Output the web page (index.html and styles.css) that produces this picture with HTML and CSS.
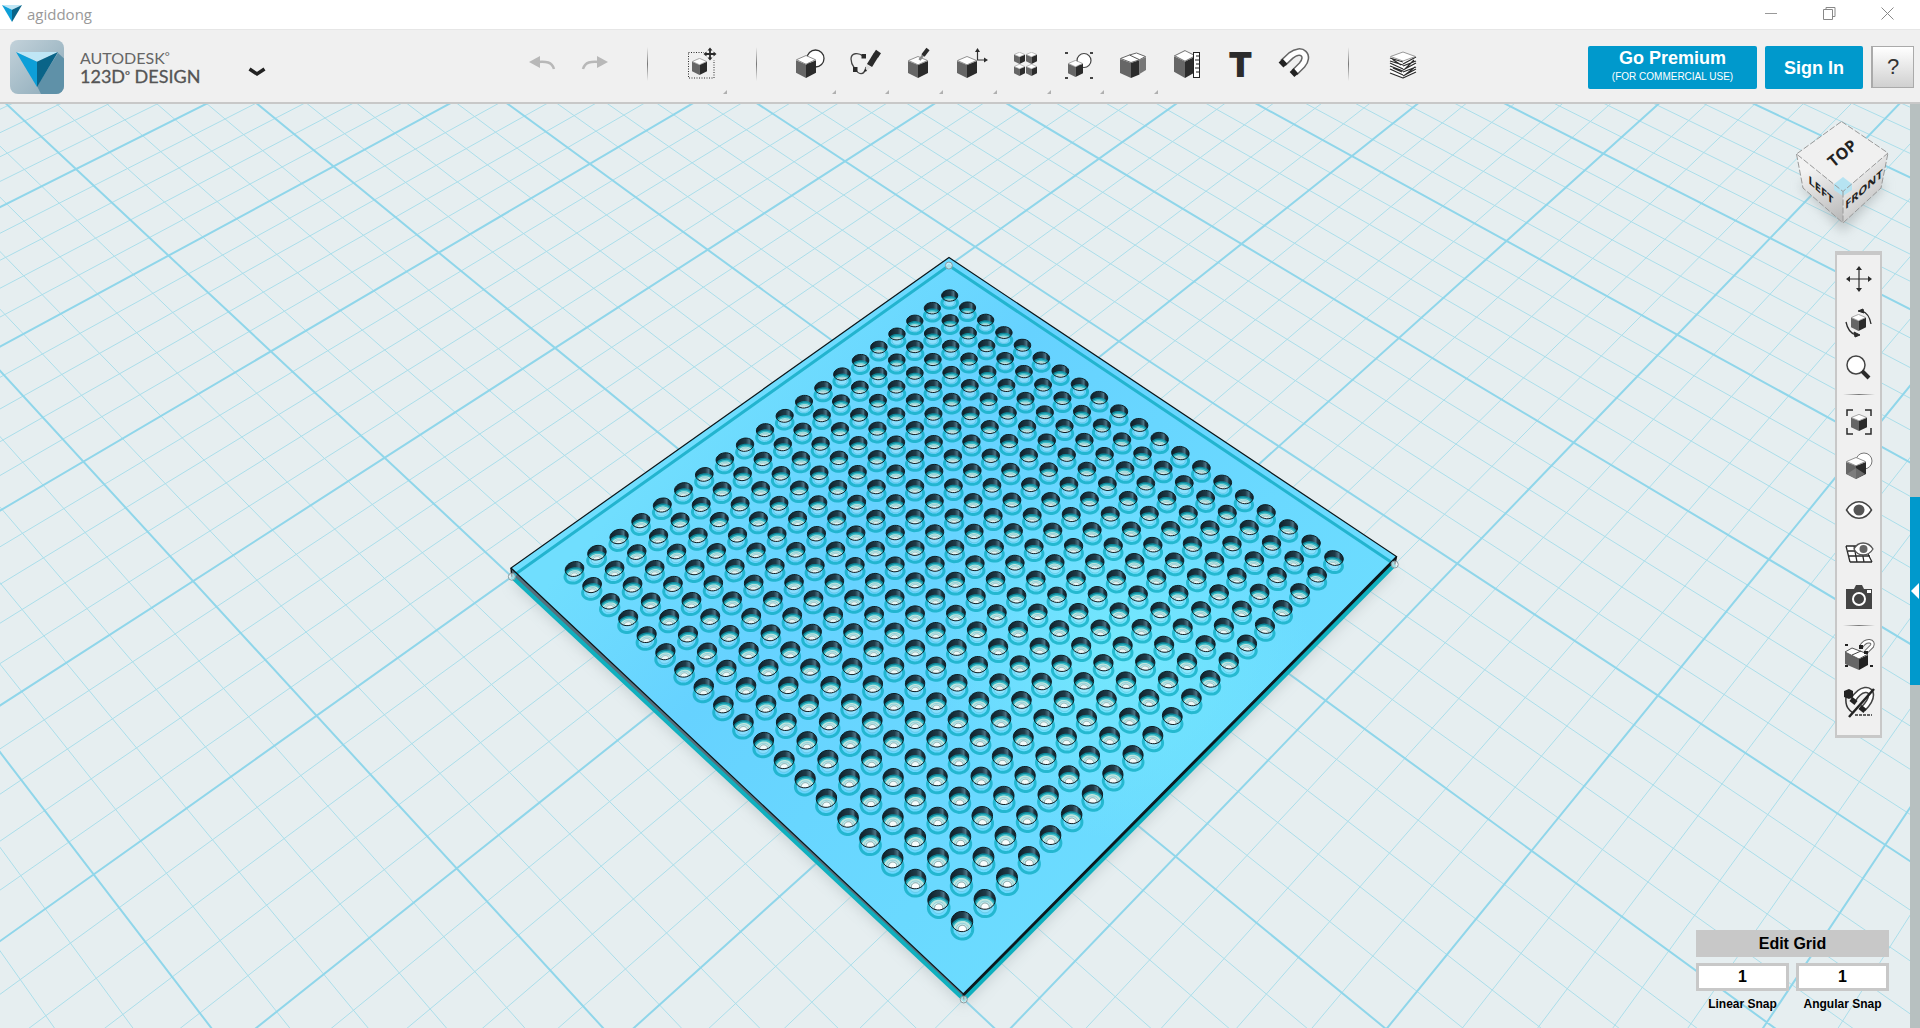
FILE: index.html
```html
<!DOCTYPE html>
<html lang="en">
<head>
<meta charset="utf-8">
<title>agiddong</title>
<link rel="stylesheet" href="styles.css">
</head>
<body>
<svg class="sprite" aria-hidden="true">
  <symbol id="cube" viewBox="0 0 20 22" preserveAspectRatio="none">
    <path d="M0 5 L10 9 V22 L0 17Z" fill="#666"/>
    <path d="M20 5 L10 9 V22 L20 17Z" fill="#2b2b2b"/>
    <path d="M10 .5 L19.5 4.5 L10 8.8 L.5 4.5Z" fill="#fff" stroke="#777" stroke-width=".8"/>
  </symbol>
  <symbol id="gem" viewBox="0 0 42 40" preserveAspectRatio="none">
    <path d="M0 0 H42 L21 11Z" fill="#bfe6f5"/>
    <path d="M0 0 L21 11 V40Z" fill="#0d9fd8"/>
    <path d="M42 0 L21 11 V40Z" fill="#0a6488"/>
  </symbol>
</svg>

<header class="titlebar">
  <svg class="titlebar-icon" width="20" height="17"><use href="#gem" width="20" height="17"/></svg>
  <span class="titlebar-name">agiddong</span>
  <div class="window-controls">
    <button aria-label="Minimize"><svg width="13" height="13"><path d="M0 6.5H12" stroke="#999"/></svg></button>
    <button aria-label="Restore"><svg width="13" height="13" fill="none" stroke="#888"><path d="M.5 2.5H9.500V12.500H.5Z M3 2.500V.5H12V9.500H10"/></svg></button>
    <button aria-label="Close"><svg width="13" height="13"><path d="M.5 .5L12.500 12.500M12.500 .5L.5 12.500" stroke="#888"/></svg></button>
  </div>
</header>

<div class="toolbar">
  <div class="brand">
    <svg class="brand-logo" width="54" height="54" viewBox="0 0 54 54">
      <defs>
        <linearGradient id="tile" x1="0" y1="0" x2="1" y2="1"><stop offset="0" stop-color="#c3d2da"/><stop offset="1" stop-color="#8ba9b8"/></linearGradient>
        <clipPath id="tileClip"><rect width="54" height="54" rx="8"/></clipPath>
      </defs>
      <rect width="54" height="54" rx="8" fill="url(#tile)"/>
      <path d="M48 13 L60 24 V60 H34 L27 46Z" fill="#5f91a8" clip-path="url(#tileClip)"/>
      <use href="#gem" x="6" y="12" width="42" height="35"/>
    </svg>
    <div class="brand-text"><span class="brand-maker">AUTODESK<sup>°</sup></span><span class="brand-product">123D<sup>°</sup> DESIGN</span></div>
    <button class="brand-menu" aria-label="Menu"><svg width="18" height="10"><path d="M1.500 2L9 7L16.500 2" fill="none" stroke="#222" stroke-width="3.500"/></svg></button>
  </div>

  <div class="history">
    <button aria-label="Undo"><svg width="27" height="14"><path d="M0 6L11 0V12Z" fill="#b8b8b8"/><path d="M8 6C17 5 23 6 25 13" fill="none" stroke="#b8b8b8" stroke-width="2.500"/></svg></button>
    <button aria-label="Redo"><svg width="27" height="14"><path d="M27 6L16 0V12Z" fill="#b8b8b8"/><path d="M19 6C10 5 4 6 2 13" fill="none" stroke="#b8b8b8" stroke-width="2.500"/></svg></button>
  </div>
  <span class="divider"></span>
  <button class="tool more" aria-label="Transform"><svg viewBox="0 0 32 32"><path d="M2.500 4.500H28V30H2.500Z" fill="none" stroke="#2b2b2b" stroke-dasharray="1 1.500"/><rect x="18" y="0" width="12" height="12" fill="#f0f0f0"/><use href="#cube" x="6" y="10" width="15" height="17"/><path d="M24 1V11M19 6H29" stroke="#2b2b2b" stroke-width="1.800"/><path d="M24 -.5L26.500 2.500H21.500ZM24 12.500L26.500 9.500H21.500ZM17.500 6L20.500 3.500V8.500ZM30.500 6L27.500 3.500V8.500Z" fill="#2b2b2b"/></svg></button>
  <span class="divider"></span>
  <div class="tools">
    <button class="tool more" aria-label="Primitives"><svg viewBox="0 0 32 32"><circle cx="20.500" cy="10.500" r="8.500" fill="#fff" stroke="#333" stroke-width="1.300"/><use href="#cube" x="1" y="7" width="20" height="23"/></svg></button>
    <button class="tool more" aria-label="Sketch"><svg viewBox="0 0 32 32"><path d="M14 8C9 4 2 5 2 11C2 16 4 18 6 21C9 26 15 29 17 19" fill="none" stroke="#444" stroke-width="1.300"/><path d="M12.500 6H17V10.500H12.500ZM4 19H8.500V24H4Z" fill="#2b2b2b"/><path d="M20.500 17.500L27 7" stroke="#2b2b2b" stroke-width="6"/><path d="M26.500 8L29.500 3.500" stroke="#2b2b2b" stroke-width="6"/><path d="M17.500 16.500L22 19.500L16 24Z" fill="#ddd"/><path d="M16.500 20.500L18 23L15 24Z" fill="#222"/></svg></button>
    <button class="tool more" aria-label="Construct"><svg viewBox="0 0 32 32"><use href="#cube" x="6" y="8" width="20" height="22"/><path d="M17.500 12L21.500 6.500" stroke="#888" stroke-width="2.500"/><path d="M21 7.500L26 1" stroke="#2b2b2b" stroke-width="4"/></svg></button>
    <button class="tool more" aria-label="Modify"><svg viewBox="0 0 32 32"><use href="#cube" x="1" y="8" width="20" height="22"/><path d="M21.500 3V12H29" fill="none" stroke="#333" stroke-width="1.200"/><path d="M21.500 0L24 4H19ZM32 12L28 9.500V14.500Z" fill="#2b2b2b"/></svg></button>
    <button class="tool more" aria-label="Pattern"><svg viewBox="0 0 32 32"><use href="#cube" x="4" y="4" width="11" height="12"/><use href="#cube" x="16" y="4" width="11" height="12"/><use href="#cube" x="4" y="16" width="11" height="12"/><use href="#cube" x="16" y="16" width="11" height="12"/></svg></button>
    <button class="tool more" aria-label="Grouping"><svg viewBox="0 0 32 32"><circle cx="21" cy="12.500" r="7" fill="#fff" stroke="#444" stroke-width="1.200"/><use href="#cube" x="5" y="12" width="15" height="17"/><path d="M2 4H5V6H2ZM27 4H30V6H27ZM2 29H5V31H2ZM27 29H30V31H27Z" fill="#444"/></svg></button>
    <button class="tool more" aria-label="Combine"><svg viewBox="0 0 32 32"><path d="M3 11L14 15V30L3 25Z" fill="#666"/><path d="M14 15L22.500 12V26.500L14 30Z" fill="#2b2b2b"/><path d="M22.500 12L29 9V22L22.500 26Z" fill="#777"/><path d="M3.500 10.500L12.500 7L19.500 5L28.500 8.500L22 12L14 14.500Z" fill="#fff" stroke="#666"/><path d="M12.500 7L22 11.500" stroke="#555"/></svg></button>
    <button class="tool" aria-label="Measure"><svg viewBox="0 0 32 32"><use href="#cube" x="3" y="2" width="22" height="28"/><rect x="22.500" y="4.500" width="6" height="25" fill="#fff" stroke="#222"/><path d="M25 8H28M24 12H28M25 16H28M24 20H28M25 24H28" stroke="#222"/></svg></button>
    <button class="tool tool-text" aria-label="Text">T</button>
    <button class="tool" aria-label="Snap"><svg viewBox="0 0 32 32" fill="none"><path d="M5 15L13 7.500C24 -1 32 8 24 17L16.500 24.500" stroke="#666" stroke-width="8"/><path d="M5 15L13 7.500C24 -1 32 8 24 17L16.500 24.500" stroke="#fff" stroke-width="5"/><path d="M3 17L7 13.200M14 26.500L18 22.900" stroke="#222" stroke-width="7"/></svg></button>
  </div>
  <span class="divider"></span>
  <button class="tool" aria-label="Material"><svg viewBox="0 0 32 32"><path d="M3 8L16 13V30L3 25ZM29 8L16 13V30L29 25Z" fill="#fff"/><path d="M3 10L16 14M3 13L16 17M3 15L16 21M3 18L16 23M3 21L16 27M3 25L16 30M16 16L29 9M16 18L29 13M16 22L29 15M16 24L29 19M16 28L29 21M16 30L29 24M5 11L14 17M18 21L27 12M6 20L15 24M18 27L28 19" fill="none" stroke="#2b2b2b" stroke-width="1.300"/><path d="M3.500 8.500L16 4L28.500 8.500L16 13Z" fill="#fff" stroke="#999"/></svg></button>

  <div class="account">
    <button class="cta premium">Go Premium<small>(FOR COMMERCIAL USE)</small></button>
    <button class="cta signin">Sign In</button>
    <button class="help">?</button>
  </div>
</div>

<main class="workspace">
  <section class="stage">
    <svg id="scene" class="scene" viewBox="0 104 1910 924" preserveAspectRatio="xMidYMid slice" role="img" aria-label="Perforated plate on the work grid">
      <defs>
        <linearGradient id="plateFill" gradientUnits="userSpaceOnUse" x1="730" y1="380" x2="1200" y2="800">
          <stop offset="0" stop-color="#70defe"/><stop offset=".3" stop-color="#66d2ff"/><stop offset=".55" stop-color="#68d6ff"/><stop offset="1" stop-color="#6cdcff"/>
        </linearGradient>
        <radialGradient id="glow" gradientUnits="userSpaceOnUse" cx="1120" cy="650" r="190">
          <stop offset="0" stop-color="#74e8fd"/><stop offset="1" stop-color="#74e8fd" stop-opacity="0"/>
        </radialGradient>
        <linearGradient id="wall"><stop offset="0" stop-color="#0e1f28"/><stop offset=".55" stop-color="#1f3c4a"/><stop offset=".75" stop-color="#4c7486"/><stop offset=".85" stop-color="#1b3440"/><stop offset="1" stop-color="#10222b"/></linearGradient>
        <filter id="soft"><feGaussianBlur stdDeviation="7"/></filter>
      </defs>
    </svg>

    <svg class="viewcube" width="120" height="130" viewBox="1782 112 120 130" role="img" aria-label="View cube">
      <defs>
        <linearGradient id="faceL" x1=".3" y1="0" x2=".6" y2="1"><stop offset=".2" stop-color="#f2f2f2"/><stop offset="1" stop-color="#bdbdbd"/></linearGradient>
        <linearGradient id="faceR" x1=".2" y1="0" x2=".8" y2="1"><stop offset=".2" stop-color="#f0f0f0"/><stop offset="1" stop-color="#b4b4b4"/></linearGradient>
        <filter id="cubeShade" x="-30%" y="-30%" width="160%" height="160%"><feGaussianBlur stdDeviation="6"/></filter>
      </defs>
      <path d="M1800 185L1843 165L1886 185L1843 232Z" fill="#9aa2a4" opacity=".55" filter="url(#cubeShade)"/>
      <path d="M1796.500 154L1843 191.500V223L1803 188Z" fill="url(#faceL)"/>
      <path d="M1888 153L1843 191.500V223L1881 188Z" fill="url(#faceR)"/>
      <path d="M1841.500 121.500L1888 153L1843 191.500L1796.500 154Z" fill="#f0f0f0"/>
      <path d="M1843 177L1852 184V190L1843 196L1834 190V184Z" fill="#b6e3f2"/>
      <path d="M1841.500 121.500L1888 153L1843 191.500L1796.500 154ZM1796.500 154L1803 188L1843 223L1881 188L1888 153M1843 191.500V223" fill="none" stroke="#999" stroke-dasharray="6 2"/>
      <text class="face-top" transform="translate(1842 153) rotate(-40)" text-anchor="middle" y="6">TOP</text>
      <text class="face-side" transform="translate(1821 190) skewY(42)" text-anchor="middle" y="4">LEFT</text>
      <text class="face-side" transform="translate(1864 189) skewY(-42)" text-anchor="middle" y="4">FRONT</text>
    </svg>

    <nav class="navbar" aria-label="View tools">
      <button aria-label="Pan"><svg viewBox="0 0 28 28"><path d="M14 3V25M3 14H25" stroke="#2b2b2b" stroke-width="1.200"/><path d="M14 1L17 5H11ZM14 27L17 23H11ZM1 14L5 11V17ZM27 14L23 11V17Z" fill="#2b2b2b"/></svg></button>
      <button aria-label="Orbit"><svg viewBox="0 0 28 28"><use href="#cube" x="6" y="5" width="15" height="17"/><path d="M17 2C23 4 25 9 26 15M11 26C4 24 2 18 1 13" fill="none" stroke="#2b2b2b" stroke-width="1.300"/><path d="M13 2L18 0L19 4ZM15 26L10 28L9 23Z" fill="#2b2b2b" stroke="#2b2b2b"/></svg></button>
      <button aria-label="Zoom"><svg viewBox="0 0 28 28"><circle cx="11" cy="12" r="9" fill="#fff" stroke="#444" stroke-width="1.500"/><path d="M17 18L24 25" stroke="#2b2b2b" stroke-width="4"/></svg></button>
      <hr>
      <button aria-label="Fit"><svg viewBox="0 0 28 28"><path d="M2 8V2H8M20 2H26V8M26 20V26H20M8 26H2V20" fill="none" stroke="#2b2b2b" stroke-width="1.500"/><use href="#cube" x="6" y="6" width="16" height="17"/></svg></button>
      <button aria-label="Materials and outlines"><svg viewBox="0 0 28 28"><circle cx="19" cy="9" r="8" fill="#fff" stroke="#777"/><use href="#cube" x="1" y="5" width="20" height="22"/><path d="M2 22L11 16L20 22L11 27Z" fill="#888" opacity=".7"/></svg></button>
      <button aria-label="Visibility"><svg viewBox="0 0 28 28"><path d="M1.500 14C8 3 20 3 26.500 14C20 25 8 25 1.500 14Z" fill="#fff" stroke="#444" stroke-width="1.500"/><circle cx="14" cy="14" r="5.500" fill="#555"/></svg></button>
      <button aria-label="Grid visibility"><svg viewBox="0 0 28 28"><path d="M1 6H24L27 22H5Z" fill="#fff"/><path d="M1 6H20M1 6L5 22M3 11H24M4 16H25M5 22H27M9 6L12 22M16 6L19 22M23 14L27 22" fill="none" stroke="#2b2b2b" stroke-width="1.300"/><path d="M9 9C13 1 23 1 28 9C23 17 13 17 9 9Z" fill="#fff" stroke="#555" stroke-width="1.300"/><circle cx="18.500" cy="9" r="4" fill="#666"/></svg></button>
      <button aria-label="Screenshot"><svg viewBox="0 0 28 28"><path d="M1 5H9L11 1H17L19 5H27V25H1Z" fill="#444"/><circle cx="14" cy="15" r="6" fill="none" stroke="#fff" stroke-width="2"/><path d="M22 6H26V9H22Z" fill="#fff"/></svg></button>
      <hr>
      <button class="tall" aria-label="Snap while grouping"><svg viewBox="0 0 30 32"><path d="M1 13L15 20V31L1 25Z" fill="#666"/><path d="M24 16L15 20V31L24 26Z" fill="#222"/><path d="M1 13L8 9L24 15L15 20Z" fill="#fff" stroke="#555"/><path d="M8 16L17 12" stroke="#444"/><path d="M17 8C22 -1 31 2 28 7L22 13" fill="none" stroke="#666" stroke-width="4.500"/><path d="M17 8C22 -1 31 2 28 7L22 13" fill="none" stroke="#fff" stroke-width="2.500"/><path d="M15 6H19V10H15ZM20 12H24V15H20ZM1 5H4V7H1ZM1 26H4V28H1ZM26 26H29V28H26Z" fill="#222"/></svg></button>
      <button class="tall" aria-label="Snap off"><svg viewBox="0 0 30 32"><path d="M2 10C1 20 5 23 9 26" fill="none" stroke="#333" stroke-width="1.500"/><path d="M11 28H28" stroke="#333" stroke-width="1.500" stroke-dasharray="3 1"/><path d="M9 13C17 0 27 1 27 8C27 13 24 17 19 22" fill="none" stroke="#444" stroke-width="6.500"/><path d="M9 13C17 0 27 1 27 8C27 13 24 17 19 22" fill="none" stroke="#fff" stroke-width="3.500"/><path d="M7 12L12 16M16 20L21 24" stroke="#222" stroke-width="5"/><path d="M0 4L5 2L9 4V10L5 12L0 10Z" fill="#222"/><path d="M5 30L30 2" stroke="#222" stroke-width="2.500"/></svg></button>
    </nav>

    <form class="snap">
      <button type="button" class="edit-grid">Edit Grid</button>
      <div class="snap-field"><input id="linear" value="1"><label for="linear">Linear Snap</label></div>
      <div class="snap-field"><input id="angular" value="1"><label for="angular">Angular Snap</label></div>
    </form>
  </section>
  <aside class="drawer"><button aria-label="Open parts bin"><svg width="8" height="16"><path d="M8 0V16L0 8Z" fill="#fff"/></svg></button></aside>
</main>
<script src="scene.js"></script>
</body>
</html>
```

FILE: styles.css
```css
* { box-sizing: border-box; }

body {
  margin: 0;
  height: 100vh;
  display: flex;
  flex-direction: column;
  overflow: hidden;
  font-family: "Liberation Sans", Arial, sans-serif;
  background: #e6eef0;
}

button {
  font: inherit;
  padding: 0;
  border: 0;
  background: none;
}

svg { display: block; overflow: visible; }
.sprite { position: absolute; width: 0; height: 0; }

.titlebar {
  display: flex;
  align-items: center;
  height: 29px;
  flex: none;
  padding: 0 4px 2px 2px;
  background: #fff;
}
.titlebar-name {
  margin-left: 5px;
  font: 400 15px "Open Sans", sans-serif;
  color: #999;
}
.window-controls { display: flex; margin-left: auto; }
.window-controls button {
  width: 58px;
  height: 27px;
  display: grid;
  place-items: center;
}

.toolbar {
  display: flex;
  align-items: flex-start;
  flex: none;
  height: 75px;
  padding: 3px 6px 0 10px;
  background: #f0f0f0;
  border-top: 1px solid #e6e6e6;
  border-bottom: 2px solid #c8c8c8;
}
.brand {
  flex: 0 1 506px;
  display: flex;
  align-items: center;
  padding-top: 7px;
}
.brand-text {
  display: flex;
  flex-direction: column;
  width: 128px;
  margin-left: 16px;
  font-family: Lato, sans-serif;
  line-height: 18px;
  color: #555;
  white-space: nowrap;
}
.brand-text sup { line-height: 0; font-size: 12px; vertical-align: 3px; }
.brand-maker { font-size: 16px; color: #666; }
.brand-product { font-size: 18px; -webkit-text-stroke: 0.3px #555; }
.brand-menu { margin: 9px 0 0 40px; }

.history { display: flex; }
.history button {
  width: 52px;
  height: 60px;
  display: grid;
  place-items: center;
}
.divider {
  flex: none;
  width: 1px;
  height: 34px;
  margin: 14px 27px 0;
  background: linear-gradient(transparent, #777 50%, transparent);
}
.tool {
  position: relative;
  width: 54px;
  height: 62px;
  display: grid;
  place-items: center;
}
.tool svg { width: 32px; height: 32px; }
.tool.more::after {
  content: "";
  position: absolute;
  right: 2px;
  bottom: 1px;
  border: 2px solid #b0b0b0;
  border-top-color: transparent;
  border-left-color: transparent;
}
.tools {
  display: grid;
  grid-template-columns: repeat(10, 1fr);
  width: 537px;
}
.tools .tool { width: 100%; }
.tool-text {
  font-size: 34px;
  font-weight: 700;
  color: #2b2b2b;
  -webkit-text-stroke: 2px #2b2b2b;
}

.account {
  display: flex;
  gap: 8px;
  margin: 13px 0 0 auto;
}
.cta {
  height: 43px;
  border-radius: 2px;
  background: #0099cc;
  color: #fff;
  font-size: 18px;
  font-weight: 700;
  line-height: 20px;
}
.premium { width: 169px; padding-bottom: 2px; }
.premium small {
  display: block;
  font-size: 10px;
  font-weight: 400;
  line-height: 18px;
}
.signin { width: 98px; }
.help {
  width: 43px;
  height: 42px;
  border: 1px solid #aaa;
  border-left-width: 2px;
  background: linear-gradient(#fff, #d0d0d0);
  color: #333;
  font-size: 22px;
}

.workspace {
  flex: 1;
  min-height: 0;
  display: flex;
}
.stage { position: relative; flex: 1; overflow: hidden; }
.scene { position: absolute; inset: 0; width: 100%; height: 100%; }
.fine { stroke: #abdeea; stroke-width: 1; }
.bold { stroke: #90d6ea; stroke-width: 2; }

.viewcube { position: absolute; top: 8px; right: 8px; }
.face-top { font: 700 16px "Open Sans", sans-serif; fill: #222; }
.face-side { font: 700 11px "Open Sans", sans-serif; fill: #222; }

.navbar {
  position: absolute;
  top: 147px;
  right: 28px;
  width: 47px;
  display: flex;
  flex-direction: column;
  padding: 2px 0 8px;
  background: #f0f0f0;
  border: 2px solid #c8c8c8;
  border-top-width: 4px;
  border-bottom-width: 3px;
}
.navbar button {
  height: 44px;
  display: grid;
  place-items: center;
}
.navbar button.tall { height: 48px; }
.navbar svg { width: 28px; height: 28px; }
.navbar .tall svg { width: 30px; height: 32px; }
.navbar hr {
  width: 32px;
  height: 1px;
  margin: 5px auto;
  border: 0;
  background: linear-gradient(90deg, transparent, #777, transparent);
}

.snap {
  position: absolute;
  right: 21px;
  bottom: 16px;
  width: 193px;
  display: grid;
  grid-template-columns: 1fr 1fr;
  gap: 6px 7px;
}
.edit-grid {
  grid-column: 1 / -1;
  height: 27px;
  background: #c8c8c8;
  font-size: 16px;
  font-weight: 700;
}
.snap-field { display: flex; flex-direction: column; }
.snap-field input {
  width: 100%;
  height: 28px;
  padding: 0;
  border: 3px solid #c8c8c8;
  background: #fff;
  font: 700 16px "Liberation Sans", Arial, sans-serif;
  text-align: center;
}
.snap-field label {
  margin-top: 5px;
  font-size: 12px;
  font-weight: 700;
  line-height: 16px;
  text-align: center;
  white-space: nowrap;
}

.drawer { width: 10px; background: #b7c0c0; }
.drawer button {
  width: 10px;
  height: 188px;
  margin-top: 393px;
  display: grid;
  place-items: center;
  background: #0099cc;
}
```

FILE: scene.js
```js
// Perspective map from plane units (1 unit = one fine grid cell) to screen,
// solved by least squares from known point pairs [u, v, x, y].
function planeMap(points) {
  const n = 8;
  const m = Array.from({ length: n }, () => new Array(n + 1).fill(0));
  const add = (row, rhs) => {
    for (let i = 0; i < n; i++) {
      for (let j = 0; j < n; j++) m[i][j] += row[i] * row[j];
      m[i][n] += row[i] * rhs;
    }
  };
  for (const [u, v, X, Y] of points) {
    const x = X / 1000, y = Y / 1000, a = u / 14, b = v / 14;
    add([a, b, 1, 0, 0, 0, -a * x, -b * x], x);
    add([0, 0, 0, a, b, 1, -a * y, -b * y], y);
  }
  for (let c = 0; c < n; c++) {
    let p = c;
    for (let r = c + 1; r < n; r++) if (Math.abs(m[r][c]) > Math.abs(m[p][c])) p = r;
    [m[c], m[p]] = [m[p], m[c]];
    for (let r = 0; r < n; r++) {
      if (r === c) continue;
      const k = m[r][c] / m[c][c];
      for (let j = c; j <= n; j++) m[r][j] -= k * m[c][j];
    }
  }
  const h = m.map((row, i) => row[n] / row[i]);
  return (u, v) => {
    const a = u / 14, b = v / 14, w = (h[6] * a + h[7] * b + 1) / 1000;
    return [(h[0] * a + h[1] * b + h[2]) / w, (h[3] * a + h[4] * b + h[5]) / w];
  };
}

const ground = planeMap([
  [0, 0, 949, 265.5], [14, 0, 1396, 565], [14, 14, 963.4, 999], [0, 14, 512, 577],
  [0, -1, 975, 246.7], [15, 13, 1039, 998], [10, -16, 1603.3, 153.3], [15, -16, 1770, 238.3]
]);
const surface = planeMap([[0, 0, 949, 257.5], [14, 0, 1396.5, 556.5], [14, 14, 963.3, 994], [0, 14, 511, 568]]);
// Hole centres lie on their own fitted lattice, 0..19 each way
const lattice = planeMap([[0, 0, 949.7, 295.5], [19, 0, 1334, 558], [19, 19, 962, 921.5], [0, 19, 574.5, 569]]);

const out = [];
const pt = p => p[0].toFixed(1) + ' ' + p[1].toFixed(1);
const poly = pts => 'M' + pts.map(pt).join('L') + 'Z';
const line = (a, b) => 'M' + pt(a) + 'L' + pt(b);
const circle = (map, u, v, r) => {
  const pts = [];
  for (let k = 0; k < 28; k++) {
    const t = k / 28 * Math.PI * 2;
    pts.push(map(u + r * Math.cos(t), v + r * Math.sin(t)));
  }
  return poly(pts);
};

// Work grid, every fifth line is bold
let fine = '', bold = '';
for (let i = -40; i <= 36; i++) {
  const lu = line(ground(i, -44), ground(i, 40));
  const lv = line(ground(-44, i), ground(40, i));
  if (((i % 5) + 5) % 5 === 0) bold += lu; else fine += lu;
  if (((i % 5) + 5) % 5 === 4) bold += lv; else fine += lv;
}
out.push(`<path class="fine" d="${fine}"/><path class="bold" d="${bold}"/>`);

// Plate
const T = surface(0, 0), R = surface(14, 0), B = surface(14, 14), L = surface(0, 14);
const t = ground(0, 0), r = ground(14, 0), b = ground(14, 14), l = ground(0, 14);
out.push(`<path d="${poly([t, r, b, l])}" transform="translate(0 6)" fill="#98a4a8" opacity=".4" filter="url(#soft)"/>`);
out.push(`<path d="${poly([L, B, b, l])}" fill="#56707e"/><path d="${poly([R, B, b, r])}" fill="#0c1a20"/>`);
out.push(`<path d="${poly([T, R, B, L])}" fill="url(#plateFill)"/><path d="${poly([T, R, B, L])}" fill="url(#glow)"/>`);
out.push(`<path d="${line(l, t)}L${pt(r)}" fill="none" stroke="#22b4cf" stroke-width="3"/>`);
out.push(`<path d="${line(l, b)}L${pt(r)}" fill="none" stroke="#10b0bf" stroke-width="4"/>`);
out.push(`<path d="${poly([T, R, B, L])}" fill="none" stroke="#0a1418" stroke-width="1.2"/>`);
out.push(`<path d="${line(L, l)}${line(B, b)}${line(R, r)}" stroke="#0a1418" stroke-width="1.4"/>`);

const radius = 0.325;
const first = 0.98, step = (14 - 2 * first) / 19;
let clips = '', holes = '';
for (let i = 0; i < 20; i++) {
  for (let j = 0; j < 20; j++) {
    const u = first + i * step, v = first + j * step, id = `h${i}-${j}`;
    const rim = circle(lattice, i, j, radius), base = circle(ground, u, v, 0.2);
    const near = (i + j) / 38;
    clips += `<clipPath id="${id}"><path d="${rim}"/></clipPath>`;
    holes += `<path d="${rim}" fill="url(#wall)"/>`
      + `<path d="${base}" fill="#bfe6e0" clip-path="url(#${id})"/>`
      + `<path d="${circle(ground, u, v, 0.12)}" fill="#c9f1fb" fill-opacity=".35" stroke="#5ab4cc" stroke-opacity=".45"/>`
      + `<path d="${base}" fill="none" stroke="#06a8bc" stroke-opacity=".7" stroke-width="3"/>`
      + `<path d="${circle(ground, u, v, 0.08)}" fill="#fff" fill-opacity="${(0.2 + near * 0.75).toFixed(2)}" stroke="#6d8f93" stroke-opacity="${(near * 0.8).toFixed(2)}" clip-path="url(#${id})"/>`
      + `<path d="${rim}" fill="none" stroke="#0d1c22"/>`;
  }
}
out.push(`<defs>${clips}</defs>${holes}`);

for (const [x, y] of [l, b, r, t]) {
  out.push(`<circle cx="${x}" cy="${y}" r="3.5" fill="#fff" fill-opacity=".6" stroke="#8a9a9e"/>`);
}
document.getElementById('scene').insertAdjacentHTML('beforeend', out.join(''));
```
